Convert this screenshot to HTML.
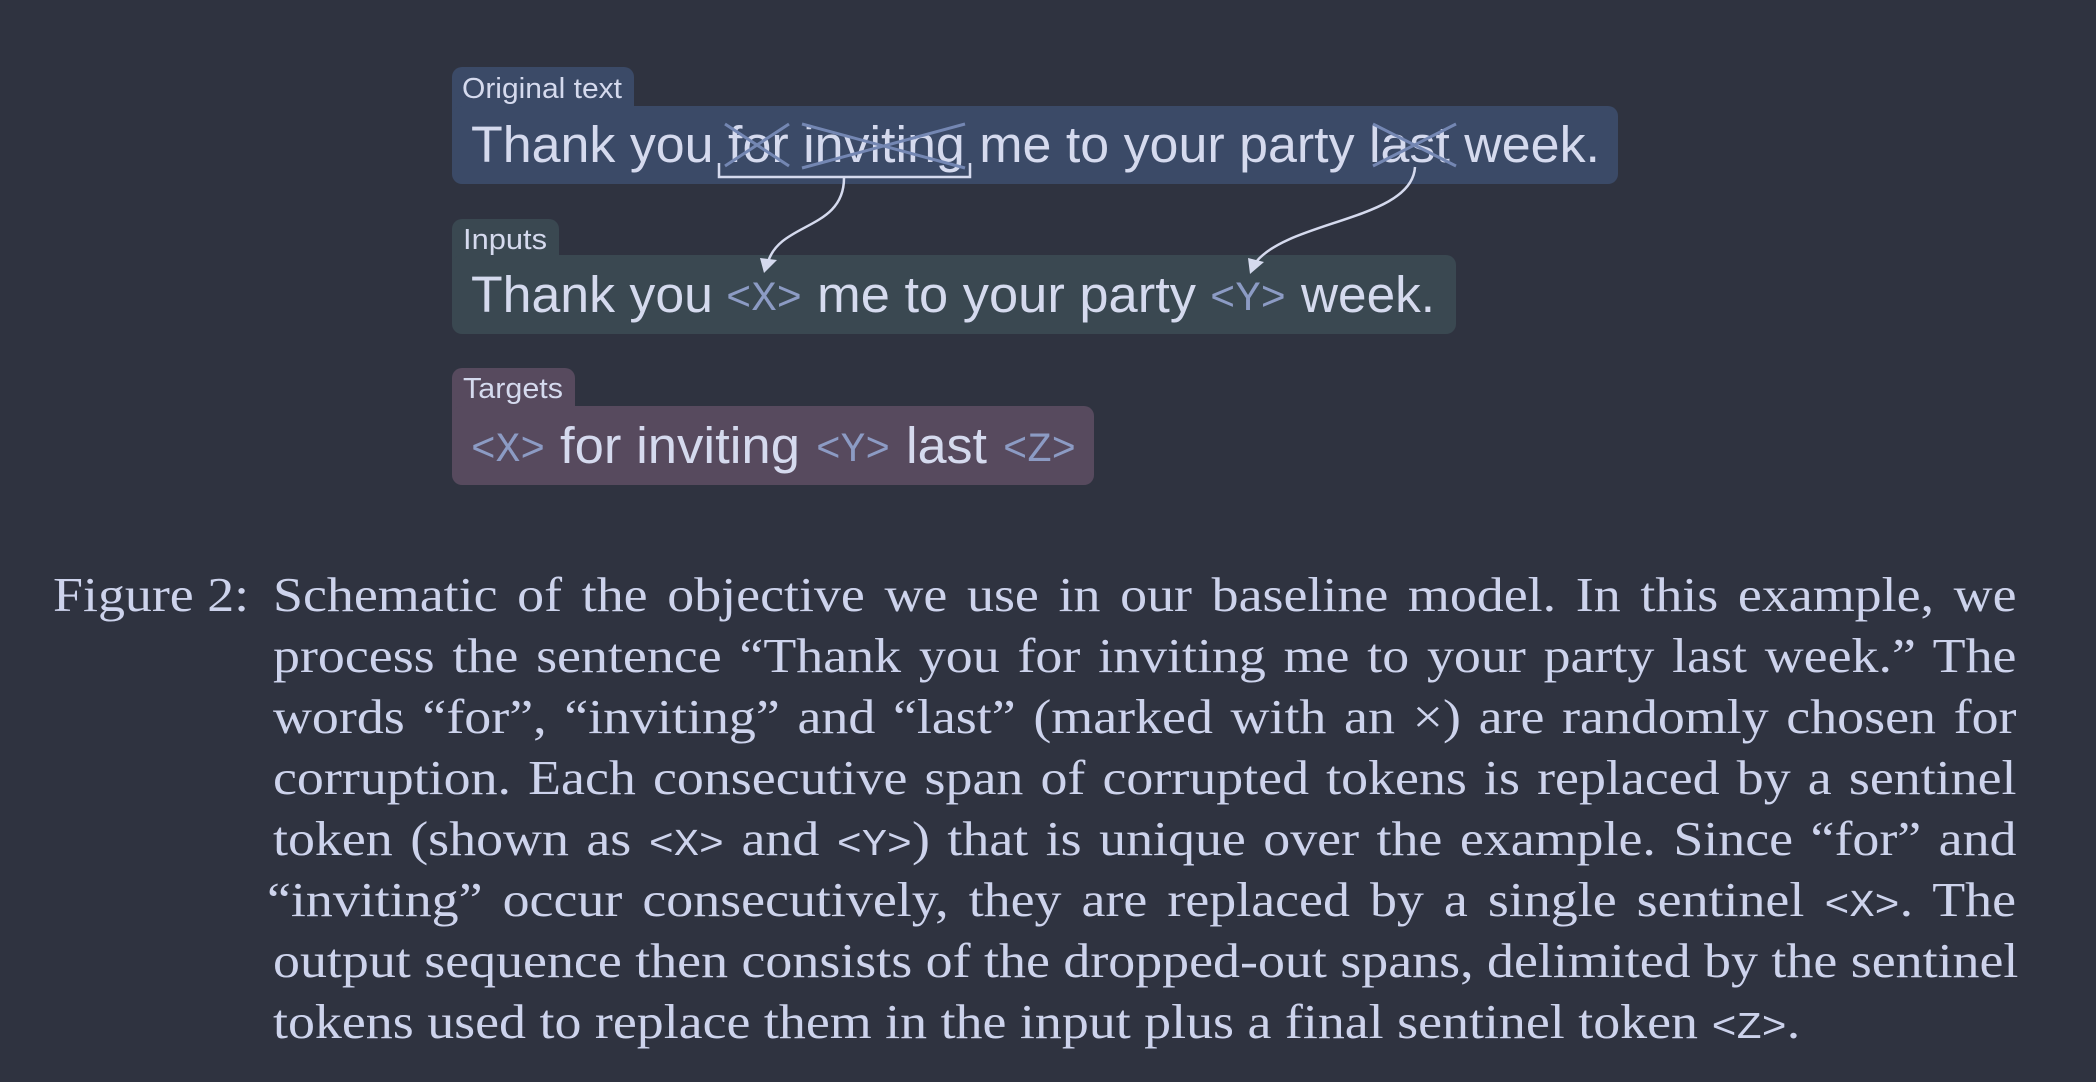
<!DOCTYPE html>
<html><head><meta charset="utf-8"><style>
html,body{margin:0;padding:0;background:#2f3340;width:2096px;height:1082px;overflow:hidden}
svg{position:absolute;left:0;top:0}
.cap{position:absolute;left:0;top:0;font-family:"Liberation Serif",serif;font-size:49px;color:#cdd3ec;white-space:nowrap}
.ln{position:absolute;left:273px;width:1585px;text-align:justify;text-align-last:justify;white-space:nowrap;line-height:1;transform:scaleX(1.1);transform-origin:0 0}
.ln.last{text-align-last:left}
.m{font-family:"Liberation Mono",monospace;font-size:38px}
</style></head><body>
<svg width="2096" height="1082" viewBox="0 0 2096 1082" font-family="Liberation Sans, sans-serif">
<rect x="452" y="67" width="182" height="60" rx="10" fill="#3b4a67"/>
<rect x="452" y="106" width="1166" height="78" rx="10" fill="#3b4a67"/>
<rect x="452" y="219" width="107" height="60" rx="10" fill="#3a4851"/>
<rect x="452" y="255" width="1004" height="79" rx="10" fill="#3a4851"/>
<rect x="452" y="368" width="123" height="60" rx="10" fill="#574a5e"/>
<rect x="452" y="406" width="642" height="79" rx="10" fill="#574a5e"/>
<g fill="#d5daee" font-size="29">
<text x="462" y="98" textLength="160" lengthAdjust="spacingAndGlyphs">Original text</text>
<text x="463" y="249" textLength="84" lengthAdjust="spacingAndGlyphs">Inputs</text>
<text x="463" y="398" textLength="100" lengthAdjust="spacingAndGlyphs">Targets</text>
</g>
<g fill="#d5daee" font-size="51">
<text x="471" y="162" textLength="1129" lengthAdjust="spacingAndGlyphs">Thank you for inviting me to your party last week.</text>
<text x="471" y="312" textLength="242" lengthAdjust="spacingAndGlyphs">Thank you</text>
<text x="817" y="312" textLength="379" lengthAdjust="spacingAndGlyphs">me to your party</text>
<text x="1301" y="312" textLength="134" lengthAdjust="spacingAndGlyphs">week.</text>
<text x="560" y="463" textLength="240" lengthAdjust="spacingAndGlyphs">for inviting</text>
<text x="906" y="463" textLength="81" lengthAdjust="spacingAndGlyphs">last</text>
</g>
<g fill="#8c9bc4" font-size="42" font-family="Liberation Mono, monospace">
<text x="726" y="310" textLength="76" lengthAdjust="spacingAndGlyphs">&lt;X&gt;</text>
<text x="1210" y="310" textLength="76" lengthAdjust="spacingAndGlyphs">&lt;Y&gt;</text>
<text x="471" y="461" textLength="74" lengthAdjust="spacingAndGlyphs">&lt;X&gt;</text>
<text x="816" y="461" textLength="74" lengthAdjust="spacingAndGlyphs">&lt;Y&gt;</text>
<text x="1003" y="461" textLength="73" lengthAdjust="spacingAndGlyphs">&lt;Z&gt;</text>
</g>
<g stroke="#7487b3" stroke-width="3" fill="none">
<path d="M725 166 L789 124 M725 124 L789 166"/>
<path d="M802 168 L965 124 M802 124 L965 168"/>
<path d="M1373 166 L1456 124 M1373 124 L1456 166"/>
</g>
<g stroke="#d5daee" stroke-width="2.5" fill="none">
<path d="M719 163 L719 177 L970 177 L970 163"/>
<path d="M844 178 C844 230 780 222 768 262"/>
<path d="M1415 167 C1412 220 1290 220 1256 262"/>
</g>
<path d="M760 258 L777 260 L764 273 Z" fill="#d5daee"/>
<path d="M1248 258 L1264 262 L1250 274 Z" fill="#d5daee"/>
</svg>
<div class="cap">
<div class="ln" style="left:53px;top:570px;width:auto">Figure 2:</div>
<div class="ln" style="top:570px">Schematic of the objective we use in our baseline model. In this example, we</div>
<div class="ln" style="top:631px">process the sentence “Thank you for inviting me to your party last week.” The</div>
<div class="ln" style="top:692px">words “for”, “inviting” and “last” (marked with an ×) are randomly chosen for</div>
<div class="ln" style="top:753px">corruption. Each consecutive span of corrupted tokens is replaced by a sentinel</div>
<div class="ln" style="top:814px">token (shown as <span class="m">&lt;X&gt;</span> and <span class="m">&lt;Y&gt;</span>) that is unique over the example. Since “for” and</div>
<div class="ln" style="top:875px;left:267px;width:1590px">“inviting” occur consecutively, they are replaced by a single sentinel <span class="m">&lt;X&gt;</span>. The</div>
<div class="ln" style="top:936px">output sequence then consists of the dropped-out spans, delimited by the sentinel</div>
<div class="ln last" style="top:997px">tokens used to replace them in the input plus a final sentinel token <span class="m">&lt;Z&gt;</span>.</div>
</div>
</body></html>
